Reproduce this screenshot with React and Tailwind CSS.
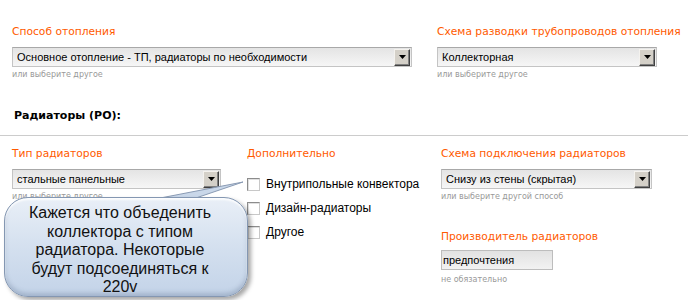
import React from 'react';

const label = "font-['DejaVu_Sans',sans-serif] text-[10.7px] leading-[13px] text-[#ff5a00]";
const hint = "font-['DejaVu_Sans',sans-serif] text-[8px] leading-[10px] text-[#999999]";

function Select({ value, width }) {
  return (
    <div
      className="flex h-[20px] items-center border border-[#c4c4c4] border-t-[#a8a8a8] bg-gradient-to-b from-[#e4e4e4] to-[#f6f6f6] pl-[4px] pr-[1px] font-['Liberation_Sans',Arial,sans-serif] text-[11px] text-black"
      style={{ width }}
    >
      <span className="flex-1 truncate">{value}</span>
      <span className="flex h-[17px] w-[16px] items-center justify-center border border-t-[#f4f2ee] border-l-[#f4f2ee] border-r-[#404040] border-b-[#404040] bg-[#d4d0c8] shadow-[inset_-1px_-1px_0_#808080]">
        <svg width="7" height="4" viewBox="0 0 7 4"><path d="M0 0h7L3.5 4z" fill="#000" /></svg>
      </span>
    </div>
  );
}

function Check({ text }) {
  return (
    <div className="flex h-[24px] items-center gap-[6px]">
      <span className="h-[13px] w-[13px] border border-[#8c8c8c] border-r-[#c8c8c8] border-b-[#c8c8c8] bg-white shadow-[inset_1px_1px_0_#e0e0e0]" />
      <span className="font-['Liberation_Sans',Arial,sans-serif] text-[12px] text-black">{text}</span>
    </div>
  );
}

export default function App() {
  return (
    <div className="relative h-[300px] w-[688px] overflow-hidden bg-white">
      <div className="flex pt-[25px]">
        <div className="w-[437px] pl-[12px]">
          <div className={label}>Способ отопления</div>
          <div className="mt-[9px]"><Select value="Основное отопление - ТП, радиаторы по необходимости" width={400} /></div>
          <div className={`${hint} mt-[3px]`}>или выберите другое</div>
        </div>
        <div>
          <div className={label}>Схема разводки трубопроводов отопления</div>
          <div className="mt-[9px]"><Select value="Коллекторная" width={220} /></div>
          <div className={`${hint} mt-[3px]`}>или выберите другое</div>
        </div>
      </div>

      <div className="mt-[29px] pl-[14px] font-['DejaVu_Sans',sans-serif] text-[11px] font-bold leading-[13px] text-black">Радиаторы (РО):</div>
      <div className="mt-[13px] h-px bg-[#cccccc]" />

      <div className="flex pt-[11px]">
        <div className="w-[247px] pl-[12px]">
          <div className={label}>Тип радиаторов</div>
          <div className="mt-[9px]"><Select value="стальные панельные" width={209} /></div>
          <div className={`${hint} mt-[3px]`}>или выберите другое</div>
        </div>
        <div className="w-[194px]">
          <div className={label}>Дополнительно</div>
          <div className="mt-[12px]">
            <Check text="Внутрипольные конвектора" />
            <Check text="Дизайн-радиаторы" />
            <Check text="Другое" />
          </div>
        </div>
        <div>
          <div className={label}>Схема подключения радиаторов</div>
          <div className="mt-[9px]"><Select value="Снизу из стены (скрытая)" width={211} /></div>
          <div className={`${hint} mt-[3px]`}>или выберите другой способ</div>
          <div className={`${label} mt-[28px]`}>Производитель радиаторов</div>
          <div className="mt-[7px] flex h-[20px] w-[112px] items-center border border-[#bdbdbd] bg-gradient-to-b from-[#e2e2e2] to-[#f2f2f2] px-[1px] font-['Liberation_Sans',Arial,sans-serif] text-[11px] text-black">предпочтения</div>
          <div className={`${hint} mt-[5px]`}>не обязательно</div>
        </div>
      </div>

      <svg className="absolute left-0 top-[178px]" width="250" height="30" viewBox="0 0 250 30">
        <path d="M150 22 L243 4 L190 22 Z" fill="#c9d7e9" stroke="#8a9bb4" strokeWidth="1" />
      </svg>
      <div className="absolute left-[4px] top-[197px] h-[100px] w-[244px] rounded-[24px] border border-[#8497b2] bg-gradient-to-b from-[#e9eff7] via-[#d4e0ef] to-[#c3d3e8] pr-[12px] pt-[6px] text-center font-['Liberation_Sans',Arial,sans-serif] text-[16px] leading-[18.5px] text-[#111111] shadow-[3px_3px_4px_rgba(0,0,0,0.35),inset_0_2px_2px_rgba(255,255,255,0.9),inset_0_-3px_4px_rgba(90,110,140,0.3)]">
        Кажется что объеденить<br />коллектора с типом<br />радиатора. Некоторые<br />будут подсоединяться к<br />220v
      </div>
    </div>
  );
}
